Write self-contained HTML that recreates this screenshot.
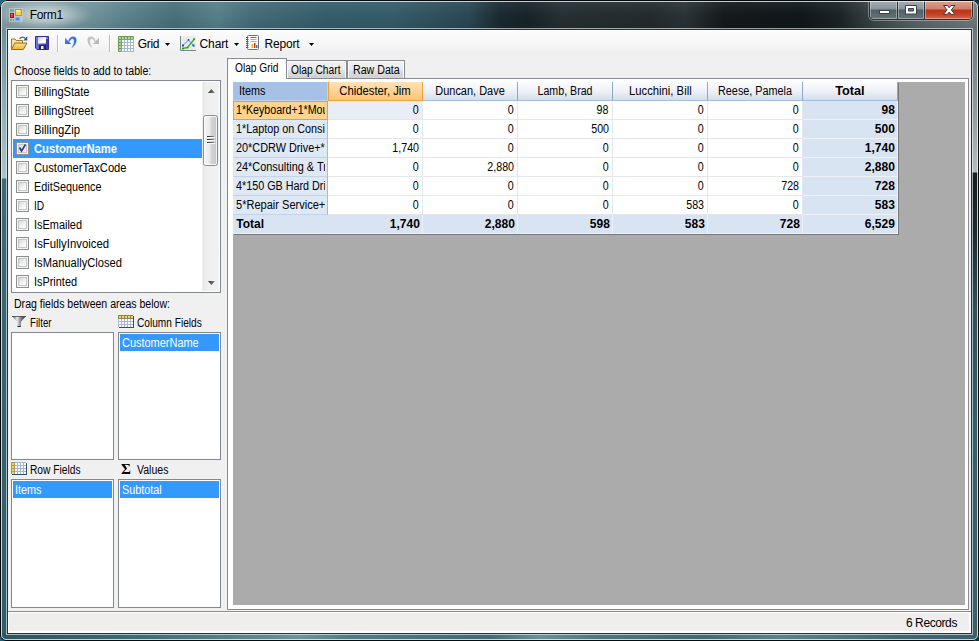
<!DOCTYPE html>
<html>
<head>
<meta charset="utf-8">
<title>Form1</title>
<style>
html,body{margin:0;padding:0;}
body{width:979px;height:641px;overflow:hidden;background:linear-gradient(90deg,#1d6680 0,#0b2b33 979px);position:relative;font-family:"Liberation Sans",sans-serif;font-size:11px;color:#000;}
.abs,#win *{position:absolute;box-sizing:border-box;}
#win{position:absolute;left:0;top:0;width:979px;height:641px;border-radius:7px 7px 6px 6px;overflow:hidden;
  background:#2f5f6b;}
#frameTop{left:0;top:0;width:979px;height:30px;
  background:linear-gradient(90deg,#879fa6 0px,#86a1a8 30px,#74959d 85px,#5a818b 130px,#477079 175px,#568089 218px,#436b78 255px,#365d6b 326px,#355c6a 393px,#2a4853 469px,#1a2a30 500px,#182428 526px,#262f33 560px,#242b2e 652px,#2a3336 685px,#14191b 725px,#10171a 802px,#1c2326 840px,#3a4649 875px,#586467 915px,#6f7b7e 979px);}
#frameTopShade{left:0;top:0;width:979px;height:30px;background:linear-gradient(180deg,rgba(255,255,255,.08) 0px,rgba(255,255,255,.05) 4px,rgba(255,255,255,0) 15px,rgba(0,0,0,.1) 30px);}
#frameLeft{left:0;top:30px;width:8px;height:611px;background:linear-gradient(180deg,#6f9298 0px,#8eacb1 70px,#adc3c6 148px,#3f6b76 149px,#39656f 300px,#2f5d69 611px);}
#frameRight{left:971px;top:30px;width:8px;height:611px;background:linear-gradient(180deg,#6a7679 0px,#8a9698 70px,#b4bcbe 142px,#161e20 143px,#1c2a2f 200px,#2c525c 280px,#34606c 400px,#3a626d 611px);}
#frameBottom{left:0;top:633px;width:979px;height:8px;background:linear-gradient(90deg,#2c5560 0px,#3a6a74 130px,#5f8c94 270px,#69969d 300px,#4d7d86 350px,#3f6c76 490px,#67939a 540px,#4a7780 600px,#3f6a74 700px,#58848c 780px,#3f6873 900px,#3a606b 979px);}
#outline{z-index:5;left:0;top:0;width:979px;height:641px;border:1px solid #05090b;border-radius:7px 7px 6px 6px;}
#outline2{z-index:5;left:1px;top:1px;width:977px;height:639px;border:1px solid rgba(232,240,242,.82);border-radius:6px 6px 5px 5px;}
#innerDark{left:7px;top:29px;width:965px;height:605px;border:1px solid #26353a;}
#innerLight{left:6px;top:28px;width:967px;height:607px;border:1px solid rgba(235,245,247,.62);}
#client{left:8px;top:30px;width:963px;height:603px;background:#f0f0f0;overflow:hidden;}
#titleGlow{left:2px;top:2px;width:90px;height:26px;background:radial-gradient(ellipse 46px 15px at 44px 13px,rgba(255,255,255,.62) 0%,rgba(255,255,255,.42) 40%,rgba(255,255,255,.12) 80%,rgba(255,255,255,0) 100%);}
#title{left:29.700px;top:8px;font-size:12px;line-height:14px;letter-spacing:-0.3px;white-space:nowrap;}
.t12{font-size:12px;line-height:14px;white-space:nowrap;}
.t11{font-size:12px;line-height:14px;white-space:nowrap;}
.lbl{transform-origin:0 0;transform:scaleX(var(--k,.9));}
#win span{position:static;display:inline-block;transform:scaleX(var(--k,.9));transform-origin:0 50%;}
#win .cell span{transform-origin:100% 50%;}
#win .hdr span{transform-origin:50% 50%;}
/* caption buttons */
#capbtns{left:869px;top:0px;width:104px;height:20px;border:1px solid #2a3033;border-top:none;border-radius:0 0 5px 5px;overflow:hidden;box-shadow:0 0 0 1px rgba(255,255,255,.35);}
#bmin{left:0;top:0;width:28px;height:19px;background:linear-gradient(180deg,#a9b2b5 0,#87939a 9px,#535f66 10px,#66737a 19px);border-right:1px solid #2a3033;box-shadow:inset 0 0 0 1px rgba(255,255,255,.35);}
#bmax{left:28px;top:0;width:27px;height:19px;background:linear-gradient(180deg,#a9b2b5 0,#87939a 9px,#535f66 10px,#66737a 19px);border-right:1px solid #2a3033;box-shadow:inset 0 0 0 1px rgba(255,255,255,.35);}
#bclose{left:55px;top:0;width:47px;height:19px;background:linear-gradient(180deg,#dfa496 0,#d07f6c 9px,#bb3319 10px,#c44528 15px,#d46a4e 19px);box-shadow:inset 0 0 0 1px rgba(255,255,255,.35);}
/* toolbar */
#toolbar{left:0;top:0;width:963px;height:25px;background:linear-gradient(180deg,#fdfdfd 0,#f7f7f7 12px,#eeeeee 25px);}
.sep{width:1px;background:#bdbdbd;box-shadow:1px 0 0 #fff;}
/* list boxes */
.box{background:#fff;border:1px solid #828790;}
.sel{background:#3399ff;color:#fff;}
.cb{width:13px;height:13px;border:1px solid #8e8f8f;background:#f4f4f4;}
.cb i{left:1px;top:1px;width:9px;height:9px;border:1px solid #c4c6c8;background:linear-gradient(135deg,#d4d6d8 0%,#f2f2f2 55%,#ffffff 100%);}
.li{left:26px;}
/* tabs */
.tab{border:1px solid #898c95;border-bottom:none;box-shadow:inset 1px 1px 0 #fafafa,inset -1px 0 0 #fafafa;background:linear-gradient(180deg,#f2f2f2 0,#ebebeb 9px,#dddddd 10px,#cfcfcf 18px);}
/* grid */
.hdr{background:linear-gradient(180deg,#fcfdfe 0,#eef1f7 9px,#d5ddeb 18px);border-right:1px solid #8ea8ca;border-bottom:1px solid #a6bddc;text-align:center;height:19px;top:0;line-height:18px;}
.cell{height:19px;text-align:right;padding-right:3.400px;line-height:18px;border-right:1px solid #e4e7ec;border-bottom:1px solid #e4e7ec;background:#fff;width:95px;}
.rh{left:0;width:95px;height:19px;background:#dfe8f5;border-right:1px solid #a3badb;border-bottom:1px solid #c3d2e8;line-height:18px;padding-left:3px;overflow:hidden;white-space:nowrap;}
.rh::after{content:"";position:absolute;right:0;top:0;width:2px;height:100%;background:#dfe8f5;}
.rhsel::after{background:#fdd38d;}
.tot::after{background:#d9e4f3;}
.rhsel{background:#fdd38d;border:1px solid #f29a38;padding-left:2px;line-height:16px;}
.cursel{background:#e9edf6;}
.tot{background:#d9e4f3;font-weight:bold;border-color:#eef2f8;padding-right:2.200px;}
</style>
</head>
<body>
<div id="win">
  <div id="frameTop"></div>
  <div id="frameTopShade"></div>
  <div id="frameLeft"></div>
  <div id="frameRight"></div>
  <div id="frameBottom"></div>
  <div id="outline"></div>
  <div id="outline2"></div>
  <div id="innerDark"></div>
  <div id="innerLight"></div>
  <div id="titleGlow"></div>
  <!-- app icon -->
  <svg id="appicon" style="left:9px;top:8px" width="14" height="14" viewBox="0 0 14 14">
    <rect x="0" y="0" width="14" height="14" fill="#d8d4d4" fill-opacity=".5"/>
    <rect x="1" y="1" width="4" height="3" fill="#87a0a6"/>
    <rect x="1" y="11" width="2" height="2" fill="#87a0a6"/><rect x="4" y="11" width="1" height="2" fill="#87a0a6"/>
    <rect x="12" y="9" width="1" height="4" fill="#c2cccf"/>
    <rect x="1" y="5" width="4" height="5" fill="#a8180e"/>
    <rect x="2" y="6" width="2" height="3" fill="#e23a2c"/><rect x="2" y="6" width="1" height="1" fill="#f08a80"/>
    <rect x="6" y="1" width="7" height="7" fill="#c9961a"/>
    <rect x="7" y="2" width="5" height="5" fill="#f9cf45"/><rect x="7" y="2" width="4" height="2" fill="#fde796"/>
    <rect x="6" y="9" width="5" height="4" fill="#7fb0f6"/>
    <rect x="7" y="10" width="3" height="2" fill="#3f86ee"/>
  </svg>
  <div id="title">Form1</div>
  <div id="capbtns">
    <div id="bmin"></div><div id="bmax"></div><div id="bclose"></div>
    <svg style="left:0;top:0" width="102" height="19" viewBox="0 0 102 19">
      <rect x="9.500" y="10.500" width="10" height="3" fill="#fff" stroke="#3a4248" stroke-width="1"/>
      <path d="M35.500 5.500h11v8.500h-11z M38.500 8.500h5v2.500h-5z" fill="#fff" fill-rule="evenodd" stroke="#3a4248" stroke-width="1"/>
      <path d="M73.500 5.500h4l1.700 2.300 1.700-2.300h4l-3.600 4.400 3.600 4.400h-4l-1.700-2.300-1.700 2.300h-4l3.600-4.400z" fill="#fff" stroke="#43353a" stroke-width="1" stroke-linejoin="round"/>
    </svg>
  </div>

  <div id="client">
    <div id="toolbar">
      <!-- open -->
      <svg style="left:3px;top:5px" width="17" height="16" viewBox="0 0 17 16">
        <defs><linearGradient id="fo" x1="0" y1="0" x2="0" y2="1"><stop offset="0" stop-color="#fbe391"/><stop offset="1" stop-color="#efb530"/></linearGradient></defs>
        <path d="M0.500 14.500v-10.500h3.500l1.200 1.500h6.300v2.500" fill="#f7e3a1" stroke="#9c7a2a"/>
        <path d="M0.500 14.500l3.300-6.500h12.200l-3.700 6.500z" fill="url(#fo)" stroke="#8f6d1e" stroke-linejoin="round"/>
        <path d="M8.500 4c1.600-2.400 4.400-2.600 6-0.300" fill="none" stroke="#4a6796" stroke-width="1.300"/>
        <path d="M16.300 1.300v4.200h-4z" fill="#34568e"/>
      </svg>
      <!-- save -->
      <svg style="left:27px;top:6px" width="14" height="14" viewBox="0 0 14 14">
        <defs><linearGradient id="sv1" x1="0" y1="0" x2="1" y2="0"><stop offset="0" stop-color="#7c7ce6"/><stop offset=".5" stop-color="#4b4cc4"/><stop offset="1" stop-color="#3a3aa6"/></linearGradient>
        <linearGradient id="sv2" x1="0" y1="0" x2="1" y2="1"><stop offset="0" stop-color="#bfc4d4"/><stop offset=".6" stop-color="#ffffff"/><stop offset="1" stop-color="#f2f4f8"/></linearGradient></defs>
        <path d="M0.500 0.500h13v13h-11.500l-1.500-1.500z" fill="url(#sv1)" stroke="#2f3192"/>
        <rect x="3" y="1" width="8" height="6.500" fill="url(#sv2)"/>
        <rect x="11.500" y="1.500" width="1" height="1.500" fill="#dfe2f6"/>
        <rect x="4" y="9" width="7" height="4.500" fill="#26284e"/>
        <rect x="6" y="10" width="2.500" height="3" fill="#f0f0f8"/>
      </svg>
      <div class="sep" style="left:49px;top:5px;height:17px"></div>
      <!-- undo -->
      <svg style="left:56px;top:5px" width="14" height="15" viewBox="0 0 14 15">
        <defs><linearGradient id="ug" x1="0" y1="0" x2="1" y2="1"><stop offset="0" stop-color="#5a92f0"/><stop offset="1" stop-color="#1f56c8"/></linearGradient></defs>
        <path d="M1 2.800v6.200h6.200z" fill="url(#ug)"/>
        <path d="M4.300 5.800C5.300 2 9 0.300 11.400 2.200C13.900 4.500 12.400 9.800 7.300 13.400C9.700 9.800 10.700 5.800 9.300 4.200C8 3 6.500 4.300 5.800 6.800z" fill="#3876e4"/>
      </svg>
      <!-- redo (disabled) -->
      <svg style="left:78px;top:5px" width="14" height="15" viewBox="0 0 14 15">
        <g transform="translate(14,0) scale(-1,1)">
        <path d="M1 2.800v6.200h6.200z" fill="#b9b9b9"/>
        <path d="M4.300 5.800C5.300 2 9 0.300 11.400 2.200C13.900 4.500 12.400 9.800 7.300 13.400C9.700 9.800 10.700 5.800 9.300 4.200C8 3 6.500 4.300 5.800 6.800z" fill="#c2c2c2"/>
        </g>
      </svg>
      <div class="sep" style="left:101px;top:5px;height:17px"></div>
      <!-- grid icon -->
      <svg style="left:110px;top:6px" width="16" height="16" viewBox="0 0 16 16">
        <rect x="0" y="0" width="16" height="16" rx="1" fill="#6a9a55"/>
        <rect x="3" y="3" width="13" height="13" fill="#a9b8d1"/>
        <rect x="3" y="3" width="12" height="1" fill="#7f9f86"/><rect x="3" y="3" width="1" height="12" fill="#7f9f86"/>
        <path d="M1 1h2v2h-2zM4 1h2v2h-2zM7 1h2v2h-2zM10 1h2v2h-2zM13 1h2v2h-2zM1 4h2v2h-2zM1 7h2v2h-2zM1 10h2v2h-2zM1 13h2v2h-2z" fill="#a9de88"/>
        <path d="M4 4h2v2h-2zM4 7h2v2h-2zM4 10h2v2h-2zM4 13h2v2h-2zM7 4h2v2h-2zM7 7h2v2h-2zM7 10h2v2h-2zM7 13h2v2h-2zM10 4h2v2h-2zM10 7h2v2h-2zM10 10h2v2h-2zM10 13h2v2h-2zM13 4h2v2h-2zM13 7h2v2h-2zM13 10h2v2h-2zM13 13h2v2h-2z" fill="#ffffff"/>
      </svg>
      <div class="t12" style="left:129.700px;top:7px;letter-spacing:-0.3px">Grid</div>
      <svg style="left:157px;top:13px" width="5" height="3" viewBox="0 0 5 3"><path d="M0 0h5l-2.500 3z" fill="#000"/></svg>
      <!-- chart icon -->
      <svg style="left:172px;top:6px" width="16" height="16" viewBox="0 0 16 16">
        <rect x="1" y="0" width="15" height="14" fill="#e9ebec"/>
        <path d="M0.500 0v14.500h15.500" fill="none" stroke="#75858f" stroke-width="1"/>
        <path d="M3 9.500l5.500-5.500 5 5.500" fill="none" stroke="#4a90e6" stroke-width="1"/>
        <path d="M2.500 12.500l5-1 7-8.500" fill="none" stroke="#48b52a" stroke-width="1.500"/>
        <rect x="2" y="8.500" width="2" height="2" fill="#1c4cae"/><rect x="12.500" y="8.500" width="2" height="2" fill="#1c4cae"/><rect x="7.700" y="3" width="1.600" height="1.600" fill="#1c4cae"/>
        <rect x="2" y="11.800" width="2" height="1.500" fill="#2c8c1e"/><rect x="6.800" y="10.800" width="1.500" height="1.500" fill="#2c8c1e"/><rect x="13.200" y="2.300" width="1.600" height="1.600" fill="#2c8c1e"/>
      </svg>
      <div class="t12" style="left:191.500px;top:7px;letter-spacing:-0.1px">Chart</div>
      <svg style="left:226px;top:13px" width="5" height="3" viewBox="0 0 5 3"><path d="M0 0h5l-2.500 3z" fill="#000"/></svg>
      <!-- report icon -->
      <svg style="left:238px;top:5px" width="14" height="16" viewBox="0 0 14 16">
        <rect x="1.500" y="0.500" width="11" height="14" rx="1" fill="#fcfcfc" stroke="#6c747c"/>
        <path d="M0 2.500h2.500M0 4.500h2.500M0 6.500h2.500M0 8.500h2.500M0 10.500h2.500M0 12.500h2.500" stroke="#555c62"/>
        <path d="M4.500 2.500h6" stroke="#3c9a4a" stroke-width="1"/>
        <path d="M4.500 4.500h6M4.500 6.500h6" stroke="#a8b0b8" stroke-width="1"/>
        <rect x="5.500" y="9" width="1.500" height="4" fill="#e6b818"/>
        <rect x="8" y="8" width="1.500" height="5" fill="#d8341c"/>
        <rect x="10" y="10" width="1.500" height="3" fill="#3b74d8"/>
      </svg>
      <div class="t12" style="left:256.500px;top:7px;letter-spacing:-0.2px">Report</div>
      <svg style="left:301px;top:13px" width="5" height="3" viewBox="0 0 5 3"><path d="M0 0h5l-2.500 3z" fill="#000"/></svg>
    </div>

    <!-- left panel -->
    <div class="t11 lbl" style="left:6px;top:34px;--k:0.883">Choose fields to add to table:</div>
    <div class="box" id="chk" style="left:3px;top:50px;width:210px;height:213px;overflow:hidden">
      <div id="chkrows" style="left:1px;top:1px;width:189px;height:209px">
        <div style="left:0;top:0;width:189px;height:19px"><div class="cb" style="left:3px;top:3px"><i></i></div><div class="t11 lbl" style="left:21px;top:3px;--k:0.924">BillingState</div></div>
        <div style="left:0;top:19px;width:189px;height:19px"><div class="cb" style="left:3px;top:3px"><i></i></div><div class="t11 lbl" style="left:21px;top:3px;--k:0.929">BillingStreet</div></div>
        <div style="left:0;top:38px;width:189px;height:19px"><div class="cb" style="left:3px;top:3px"><i></i></div><div class="t11 lbl" style="left:21px;top:3px;--k:0.945">BillingZip</div></div>
        <div class="sel" style="left:0;top:57px;width:189px;height:19px"><div class="cb" style="left:3px;top:3px"><i></i>
          <svg style="left:1px;top:1px" width="9" height="9" viewBox="0 0 9 9"><path d="M1.500 3.500l2 3.500 4-6.500" fill="none" stroke="#2f3c9c" stroke-width="1.700"/></svg></div>
          <div class="t11 lbl" style="left:21px;top:3px;font-weight:bold;--k:0.936">CustomerName</div></div>
        <div style="left:0;top:76px;width:189px;height:19px"><div class="cb" style="left:3px;top:3px"><i></i></div><div class="t11 lbl" style="left:21px;top:3px;--k:0.931">CustomerTaxCode</div></div>
        <div style="left:0;top:95px;width:189px;height:19px"><div class="cb" style="left:3px;top:3px"><i></i></div><div class="t11 lbl" style="left:21px;top:3px;--k:0.903">EditSequence</div></div>
        <div style="left:0;top:114px;width:189px;height:19px"><div class="cb" style="left:3px;top:3px"><i></i></div><div class="t11 lbl" style="left:21px;top:3px;--k:0.85">ID</div></div>
        <div style="left:0;top:133px;width:189px;height:19px"><div class="cb" style="left:3px;top:3px"><i></i></div><div class="t11 lbl" style="left:21px;top:3px;--k:0.911">IsEmailed</div></div>
        <div style="left:0;top:152px;width:189px;height:19px"><div class="cb" style="left:3px;top:3px"><i></i></div><div class="t11 lbl" style="left:21px;top:3px;--k:0.945">IsFullyInvoiced</div></div>
        <div style="left:0;top:171px;width:189px;height:19px"><div class="cb" style="left:3px;top:3px"><i></i></div><div class="t11 lbl" style="left:21px;top:3px;--k:0.929">IsManuallyClosed</div></div>
        <div style="left:0;top:190px;width:189px;height:19px"><div class="cb" style="left:3px;top:3px"><i></i></div><div class="t11 lbl" style="left:21px;top:3px;--k:0.908">IsPrinted</div></div>
      </div>
      <!-- scrollbar -->
      <div id="sb" style="left:190px;top:1px;width:17px;height:209px;background:linear-gradient(90deg,#fafafa 0,#e6e6e6 1px,#eeeeee 4px,#f1f1f1 17px)">
        <svg style="left:6px;top:7px" width="7" height="4" viewBox="0 0 7 4"><defs><linearGradient id="ag" x1="0" y1="0" x2="1" y2="0"><stop offset="0" stop-color="#2e2e2e"/><stop offset="1" stop-color="#8e8e8e"/></linearGradient></defs><path d="M0 4l3.500-4 3.500 4z" fill="url(#ag)"/></svg>
        <div style="left:1px;top:33px;width:15px;height:51px;border:1px solid #8c8c8c;border-radius:2.500px;background:linear-gradient(90deg,#f6f6f6 0,#e9e9e9 6px,#d4d4d4 7px,#c6c6c6 13px);box-shadow:inset 0 0 0 1px rgba(255,255,255,.75)"></div>
        <svg style="left:5px;top:54px" width="8" height="9" viewBox="0 0 8 9"><defs><linearGradient id="gg" x1="0" y1="0" x2="1" y2="0"><stop offset="0" stop-color="#2a2a2a"/><stop offset="1" stop-color="#8a8a8a"/></linearGradient></defs><path d="M0 0h7v1h-7zM0 3h7v1h-7zM0 6h7v1h-7z" fill="url(#gg)"/><path d="M0 1h8v1h-8zM0 4h8v1h-8zM0 7h8v1h-8z" fill="#fff" fill-opacity=".9"/></svg>
        <svg style="left:6px;top:199px" width="7" height="4" viewBox="0 0 7 4"><path d="M0 0l3.500 4 3.500-4z" fill="url(#ag)"/></svg>
      </div>
    </div>

    <div class="t11 lbl" style="left:6px;top:267px;--k:0.879">Drag fields between areas below:</div>
    <!-- filter icon -->
    <svg style="left:4px;top:286px" width="14" height="11" viewBox="0 0 14 11"><defs><linearGradient id="fg" x1="0" y1="0" x2="1" y2="0"><stop offset="0" stop-color="#3c3e3c"/><stop offset=".36" stop-color="#ecebec"/><stop offset=".6" stop-color="#8e8e8e"/><stop offset="1" stop-color="#1e201e"/></linearGradient></defs><path d="M0 0h14l-5 5.800v5.200h-4v-5.200z" fill="url(#fg)"/><path d="M0 0h14v1h-14z" fill="#4e504e" fill-opacity=".8"/><path d="M5.500 10.500h3" stroke="#222" stroke-width="1"/></svg>
    <div class="t11 lbl" style="left:22px;top:286px;--k:0.806">Filter</div>
    <svg style="left:110px;top:285px" width="16" height="13" viewBox="0 0 16 13">
      <rect x="0" y="0" width="15" height="4" fill="#8f805e"/><rect x="0" y="4" width="15" height="8" fill="#a9b6d3"/>
      <path d="M1 1h2v2h-2zM4 1h2v2h-2zM7 1h2v2h-2zM10 1h2v2h-2zM13 1h2v2h-2z" fill="#f9d458"/><path d="M1 4h2v2h-2zM1 7h2v2h-2zM1 10h2v2h-2zM4 4h2v2h-2zM4 7h2v2h-2zM4 10h2v2h-2zM7 4h2v2h-2zM7 7h2v2h-2zM7 10h2v2h-2zM10 4h2v2h-2zM10 7h2v2h-2zM10 10h2v2h-2zM13 4h2v2h-2zM13 7h2v2h-2zM13 10h2v2h-2z" fill="#ffffff"/>
      <rect x="15" y="1" width="1" height="12" fill="#30506f"/><rect x="1" y="12" width="15" height="1" fill="#30506f"/>
    </svg>
    <div class="t11 lbl" style="left:128.500px;top:286px;--k:0.844">Column Fields</div>

    <div class="box" style="left:3px;top:302px;width:103px;height:128px"></div>
    <div class="box" style="left:110px;top:302px;width:103px;height:128px">
      <div class="sel t11" style="left:1px;top:1px;width:99px;height:17px;padding:2px 0 0 2px"><span style="--k:0.913">CustomerName</span></div>
    </div>

    <svg style="left:3px;top:432px" width="16" height="13" viewBox="0 0 16 13">
      <rect x="0" y="0" width="4" height="12" fill="#a6976b"/><rect x="4" y="0" width="11" height="12" fill="#a9b6d3"/>
      <path d="M1 1h2v2h-2zM1 4h2v2h-2zM1 7h2v2h-2zM1 10h2v2h-2z" fill="#f9d458"/><path d="M4 1h2v2h-2zM4 4h2v2h-2zM4 7h2v2h-2zM4 10h2v2h-2zM7 1h2v2h-2zM7 4h2v2h-2zM7 7h2v2h-2zM7 10h2v2h-2zM10 1h2v2h-2zM10 4h2v2h-2zM10 7h2v2h-2zM10 10h2v2h-2zM13 1h2v2h-2zM13 4h2v2h-2zM13 7h2v2h-2zM13 10h2v2h-2z" fill="#ffffff"/>
      <rect x="15" y="1" width="1" height="12" fill="#30506f"/><rect x="1" y="12" width="15" height="1" fill="#30506f"/>
    </svg>
    <div class="t11 lbl" style="left:22px;top:433px;--k:0.851">Row Fields</div>
    <div class="abs" style="left:112.500px;top:432px;font-family:'Liberation Serif',serif;font-size:14px;line-height:16px;font-weight:bold;transform:scaleX(1.08);transform-origin:0 0">&Sigma;</div>
    <div class="t11 lbl" style="left:129px;top:433px;--k:0.877">Values</div>
    <div class="box" style="left:3px;top:449px;width:103px;height:129px">
      <div class="sel t11" style="left:1px;top:1px;width:99px;height:17px;padding:2px 0 0 2px"><span style="--k:0.9">Items</span></div>
    </div>
    <div class="box" style="left:110px;top:449px;width:103px;height:129px">
      <div class="sel t11" style="left:1px;top:1px;width:99px;height:17px;padding:2px 0 0 2px"><span style="--k:0.9">Subtotal</span></div>
    </div>

    <!-- status bar -->
    <div id="status" style="left:0;top:581px;width:963px;height:22px;background:#fff;border-top:1px solid #8e8e8e">
      <div style="left:1px;top:1px;width:960px;height:18px;background:#f0eded"></div>
      <div class="t12" style="right:14px;top:4px;letter-spacing:-0.4px">6 Records</div>
    </div>
    <!-- tab control -->
    <div id="page" style="left:219px;top:48px;width:742px;height:532px;background:#fff;border:1px solid #898c95"></div>
    <div class="tab" style="left:278px;top:30px;width:61px;height:18px"><div class="t11 lbl" style="left:3.500px;top:2px;--k:0.853">Olap Chart</div></div>
    <div class="tab" style="left:339px;top:30px;width:58px;height:18px"><div class="t11 lbl" style="left:4.500px;top:2px;--k:0.887">Raw Data</div></div>
    <div class="tab" style="left:219px;top:28px;width:60px;height:21px;background:#fff"><div class="t11 lbl" style="left:6.500px;top:2px;--k:0.847">Olap Grid</div></div>

    <div id="gray" style="left:225px;top:52px;width:732px;height:523px;background:#ababab"></div>
    <div id="grid" style="left:225px;top:52px;width:665px;height:152px;background:#fff;box-shadow:1px 1px 0 #787878">
      <div id="hItems" class="t11" style="left:0;top:0;width:95px;height:19px;background:#a6c1e6;line-height:18px;padding-left:6px;border-right:1px solid #c0d3ee;border-bottom:1px solid #c0d3ee"><span style="--k:.9">Items</span></div>
      <div class="hdr t11" style="left:95px;width:95px;background:linear-gradient(180deg,#fde3b8 0,#fcd59a 8px,#fbc674 18px);border:1px solid #f4a03c;border-top:none;line-height:18px"><span style="--k:0.94">Chidester, Jim</span></div>
      <div class="hdr t11" style="left:190px;width:95px"><span style="--k:0.914">Duncan, Dave</span></div>
      <div class="hdr t11" style="left:285px;width:95px"><span style="--k:0.886">Lamb, Brad</span></div>
      <div class="hdr t11" style="left:380px;width:95px"><span style="--k:0.938">Lucchini, Bill</span></div>
      <div class="hdr t11" style="left:475px;width:95px"><span style="--k:0.902">Reese, Pamela</span></div>
      <div class="hdr t11" style="left:570px;width:95px;font-weight:bold"><span style="--k:1.06">Total</span></div>
      <div class="rh t11 rhsel" style="top:19px"><span style="--k:0.885">1*Keyboard+1*Mou</span></div>
      <div class="cell t11 cursel" style="left:95px;top:19px"><span style="--k:0.89">0</span></div>
      <div class="cell t11" style="left:190px;top:19px"><span style="--k:0.89">0</span></div>
      <div class="cell t11" style="left:285px;top:19px"><span style="--k:0.89">98</span></div>
      <div class="cell t11" style="left:380px;top:19px"><span style="--k:0.89">0</span></div>
      <div class="cell t11" style="left:475px;top:19px"><span style="--k:0.89">0</span></div>
      <div class="cell t11 tot" style="left:570px;top:19px"><span style="--k:1.0">98</span></div>
      <div class="rh t11" style="top:38px"><span style="--k:0.9">1*Laptop on Consi</span></div>
      <div class="cell t11" style="left:95px;top:38px"><span style="--k:0.89">0</span></div>
      <div class="cell t11" style="left:190px;top:38px"><span style="--k:0.89">0</span></div>
      <div class="cell t11" style="left:285px;top:38px"><span style="--k:0.89">500</span></div>
      <div class="cell t11" style="left:380px;top:38px"><span style="--k:0.89">0</span></div>
      <div class="cell t11" style="left:475px;top:38px"><span style="--k:0.89">0</span></div>
      <div class="cell t11 tot" style="left:570px;top:38px"><span style="--k:1.0">500</span></div>
      <div class="rh t11" style="top:57px"><span style="--k:0.905">20*CDRW Drive+*</span></div>
      <div class="cell t11" style="left:95px;top:57px"><span style="--k:0.89">1,740</span></div>
      <div class="cell t11" style="left:190px;top:57px"><span style="--k:0.89">0</span></div>
      <div class="cell t11" style="left:285px;top:57px"><span style="--k:0.89">0</span></div>
      <div class="cell t11" style="left:380px;top:57px"><span style="--k:0.89">0</span></div>
      <div class="cell t11" style="left:475px;top:57px"><span style="--k:0.89">0</span></div>
      <div class="cell t11 tot" style="left:570px;top:57px"><span style="--k:1.0">1,740</span></div>
      <div class="rh t11" style="top:76px"><span style="--k:0.907">24*Consulting &amp; Tr</span></div>
      <div class="cell t11" style="left:95px;top:76px"><span style="--k:0.89">0</span></div>
      <div class="cell t11" style="left:190px;top:76px"><span style="--k:0.89">2,880</span></div>
      <div class="cell t11" style="left:285px;top:76px"><span style="--k:0.89">0</span></div>
      <div class="cell t11" style="left:380px;top:76px"><span style="--k:0.89">0</span></div>
      <div class="cell t11" style="left:475px;top:76px"><span style="--k:0.89">0</span></div>
      <div class="cell t11 tot" style="left:570px;top:76px"><span style="--k:1.0">2,880</span></div>
      <div class="rh t11" style="top:95px"><span style="--k:0.898">4*150 GB Hard Dri</span></div>
      <div class="cell t11" style="left:95px;top:95px"><span style="--k:0.89">0</span></div>
      <div class="cell t11" style="left:190px;top:95px"><span style="--k:0.89">0</span></div>
      <div class="cell t11" style="left:285px;top:95px"><span style="--k:0.89">0</span></div>
      <div class="cell t11" style="left:380px;top:95px"><span style="--k:0.89">0</span></div>
      <div class="cell t11" style="left:475px;top:95px"><span style="--k:0.89">728</span></div>
      <div class="cell t11 tot" style="left:570px;top:95px"><span style="--k:1.0">728</span></div>
      <div class="rh t11" style="top:114px"><span style="--k:0.92">5*Repair Service+</span></div>
      <div class="cell t11" style="left:95px;top:114px"><span style="--k:0.89">0</span></div>
      <div class="cell t11" style="left:190px;top:114px"><span style="--k:0.89">0</span></div>
      <div class="cell t11" style="left:285px;top:114px"><span style="--k:0.89">0</span></div>
      <div class="cell t11" style="left:380px;top:114px"><span style="--k:0.89">583</span></div>
      <div class="cell t11" style="left:475px;top:114px"><span style="--k:0.89">0</span></div>
      <div class="cell t11 tot" style="left:570px;top:114px"><span style="--k:1.0">583</span></div>
      <div class="rh t11 tot" style="top:133px;border-right-color:#d9e4f3;padding-left:3.300px"><span style="--k:1.0">Total</span></div>
      <div class="cell t11 tot" style="left:95px;top:133px"><span style="--k:1.0">1,740</span></div>
      <div class="cell t11 tot" style="left:190px;top:133px"><span style="--k:1.0">2,880</span></div>
      <div class="cell t11 tot" style="left:285px;top:133px"><span style="--k:1.0">598</span></div>
      <div class="cell t11 tot" style="left:380px;top:133px"><span style="--k:1.0">583</span></div>
      <div class="cell t11 tot" style="left:475px;top:133px"><span style="--k:1.0">728</span></div>
      <div class="cell t11 tot" style="left:570px;top:133px"><span style="--k:1.0">6,529</span></div>
    </div>
  </div>
</div>
</body>
</html>
